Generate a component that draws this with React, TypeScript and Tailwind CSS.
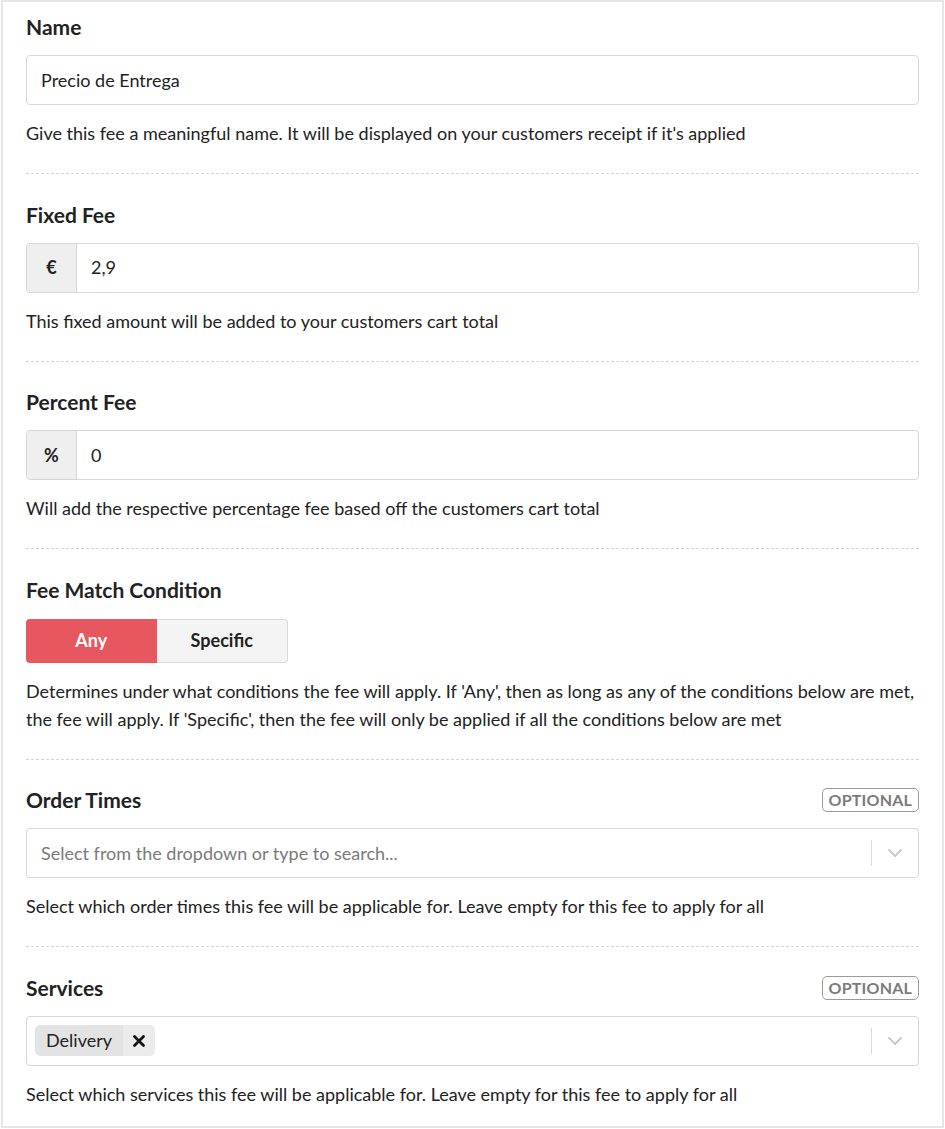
import React from "react";

const font = { fontFamily: "Lato, 'Open Sans', sans-serif" };

const Label = ({ children, optional }: { children: React.ReactNode; optional?: boolean }) => (
  <div className="flex items-center justify-between h-6">
    <span className="text-[21px] leading-6 font-bold text-[#222]">{children}</span>
    {optional && (
      <span className="h-[24px] px-[6px] flex items-center rounded-[5px] border border-[#9a9a9a] text-[16px] font-bold text-[#7b7b7b] tracking-[0.2px]">
        OPTIONAL
      </span>
    )}
  </div>
);

const Help = ({ children }: { children: React.ReactNode }) => (
  <p className="mt-[14px] text-[18px] leading-7 text-[#222]">{children}</p>
);

const Section = ({ children, last }: { children: React.ReactNode; last?: boolean }) => (
  <div className={last ? "pt-[28.5px] pb-[18px]" : "pt-[28.5px] pb-[26px] border-b border-dashed border-[#d4d4d4]"}>
    {children}
  </div>
);

const Chevron = () => (
  <div className="flex items-center h-full">
    <div className="w-px h-[26px] bg-[#d9d9d9]" />
    <svg width="46" height="20" viewBox="0 0 46 20" fill="none">
      <path d="M17 7l6 6 6-6" stroke="#c8c8c8" strokeWidth="1.8" strokeLinecap="round" strokeLinejoin="round" />
    </svg>
  </div>
);

export default function App() {
  return (
    <div style={font} className="bg-white w-[945px] h-[1129px]">
      <div className="mx-[1px] border-2 border-[#e6e6e6] px-[23px]">
        <div className="pt-[13px] pb-[26px] border-b border-dashed border-[#d4d4d4]">
          <Label>Name</Label>
          <div className="mt-4 h-[50px] rounded-[4px] border border-[#d6d6d6] flex items-center px-[14px] text-[18px] text-[#222]">
            Precio de Entrega
          </div>
          <Help>Give this fee a meaningful name. It will be displayed on your customers receipt if it's applied</Help>
        </div>

        <Section>
          <Label>Fixed Fee</Label>
          <div className="mt-4 h-[50px] rounded-[4px] border border-[#d6d6d6] flex overflow-hidden text-[18px] text-[#222]">
            <div className="w-[50px] bg-[#efefef] border-r border-[#d6d6d6] flex items-center justify-center font-bold">€</div>
            <div className="flex items-center px-[14px]">2,9</div>
          </div>
          <Help>This fixed amount will be added to your customers cart total</Help>
        </Section>

        <Section>
          <Label>Percent Fee</Label>
          <div className="mt-4 h-[50px] rounded-[4px] border border-[#d6d6d6] flex overflow-hidden text-[18px] text-[#222]">
            <div className="w-[50px] bg-[#efefef] border-r border-[#d6d6d6] flex items-center justify-center font-bold">%</div>
            <div className="flex items-center px-[14px]">0</div>
          </div>
          <Help>Will add the respective percentage fee based off the customers cart total</Help>
        </Section>

        <Section>
          <Label>Fee Match Condition</Label>
          <div className="mt-[17px] flex h-[44px] w-[262px] text-[18px] font-bold">
            <div className="flex-1 flex items-center justify-center rounded-l-[4px] bg-[#e75760] text-white">Any</div>
            <div className="flex-1 flex items-center justify-center rounded-r-[4px] bg-[#f4f4f4] border border-l-0 border-[#dadada] text-[#222]">
              Specific
            </div>
          </div>
          <Help>
            Determines under what conditions the fee will apply. If 'Any', then as long as any of the conditions below are met,
            the fee will apply. If 'Specific', then the fee will only be applied if all the conditions below are met
          </Help>
        </Section>

        <Section>
          <Label optional>Order Times</Label>
          <div className="mt-4 h-[50px] rounded-[4px] border border-[#d6d6d6] flex items-center justify-between pl-[14px] text-[18px] text-[#7a7a7a]">
            <span>Select from the dropdown or type to search...</span>
            <Chevron />
          </div>
          <Help>Select which order times this fee will be applicable for. Leave empty for this fee to apply for all</Help>
        </Section>

        <Section last>
          <Label optional>Services</Label>
          <div className="mt-4 h-[50px] rounded-[4px] border border-[#d6d6d6] flex items-center justify-between pl-[8px] text-[18px] text-[#222]">
            <div className="flex h-[31px] rounded-[5px] overflow-hidden">
              <span className="bg-[#e3e3e3] flex items-center px-[11px]">Delivery</span>
              <span className="bg-[#ebebeb] w-[32px] flex items-center justify-center">
                <svg width="14" height="14" viewBox="0 0 14 14">
                  <path d="M2.5 2.5l9 9M11.5 2.5l-9 9" stroke="#111" strokeWidth="2.8" strokeLinecap="round" />
                </svg>
              </span>
            </div>
            <Chevron />
          </div>
          <Help>Select which services this fee will be applicable for. Leave empty for this fee to apply for all</Help>
        </Section>
      </div>
    </div>
  );
}
